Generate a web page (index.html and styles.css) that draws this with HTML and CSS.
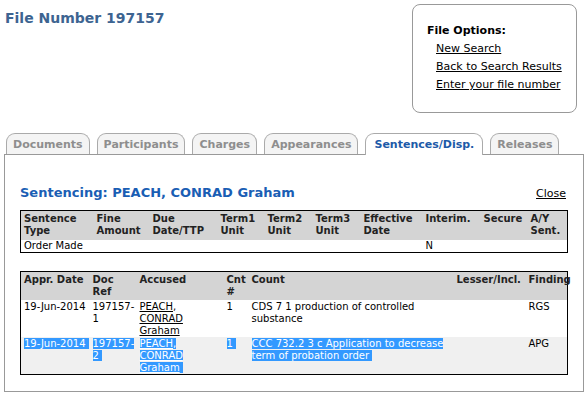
FILE: index.html
```html
<!DOCTYPE html>
<html lang="en">
<head>
    <meta charset="UTF-8">
    <title>File Number 197157</title>
    <link rel="stylesheet" href="styles.css">
</head>
<body>
    <div class="topo">
        <h1 class="titulo">File Number 197157</h1>
        <div class="opcoes">
            <h3>File Options:</h3>
            <a href="#">New Search</a>
            <a href="#">Back to Search Results</a>
            <a href="#">Enter your file number</a>
        </div>
    </div>

    <ul class="abas">
        <li class="aba">Documents</li>
        <li class="aba">Participants</li>
        <li class="aba">Charges</li>
        <li class="aba">Appearances</li>
        <li class="aba ativa">Sentences/Disp.</li>
        <li class="aba">Releases</li>
    </ul>

    <div class="painel">
        <div class="cabecalho">
            <h2>Sentencing: PEACH, CONRAD Graham</h2>
            <a href="#" class="fechar">Close</a>
        </div>

        <table class="tabela t1">
            <colgroup>
                <col style="width:73px"><col style="width:56px"><col style="width:68px"><col style="width:47px"><col style="width:48px">
                <col style="width:48px"><col style="width:62px"><col style="width:58px"><col style="width:47px"><col>
            </colgroup>
            <tr>
                <th>Sentence Type</th>
                <th>Fine Amount</th>
                <th>Due Date/TTP</th>
                <th>Term1 Unit</th>
                <th>Term2 Unit</th>
                <th>Term3 Unit</th>
                <th>Effective Date</th>
                <th>Interim.</th>
                <th>Secure</th>
                <th>A/Y Sent.</th>
            </tr>
            <tr>
                <td>Order Made</td>
                <td></td><td></td><td></td><td></td><td></td><td></td>
                <td>N</td>
                <td></td><td></td>
            </tr>
        </table>

        <table class="tabela t2">
            <colgroup>
                <col style="width:69px"><col style="width:47px"><col style="width:87px"><col style="width:25px">
                <col style="width:205px"><col style="width:72px"><col>
            </colgroup>
            <tr>
                <th>Appr. Date</th>
                <th>Doc Ref</th>
                <th>Accused</th>
                <th>Cnt #</th>
                <th>Count</th>
                <th>Lesser/Incl.</th>
                <th>Finding</th>
            </tr>
            <tr>
                <td>19-Jun-2014</td>
                <td>197157-1</td>
                <td><a href="#">PEACH</a>, <a href="#">CONRAD Graham</a></td>
                <td>1</td>
                <td>CDS 7 1 production of controlled<br>substance</td>
                <td></td>
                <td>RGS</td>
            </tr>
            <tr class="cinza">
                <td><span class="sel">19-Jun-2014</span></td>
                <td><span class="sel">197157-2</span></td>
                <td><span class="sel"><a href="#">PEACH</a>, <a href="#">CONRAD Graham</a></span></td>
                <td><span class="sel">1</span></td>
                <td><span class="sel">CCC 732.2 3 c Application to decrease term of probation order</span></td>
                <td></td>
                <td>APG</td>
            </tr>
        </table>
    </div>
</body>
</html>
```

FILE: styles.css
```css
body {
    margin: 0;
    padding: 4px 1px 4px 4px;
    font-family: "DejaVu Sans", Verdana, sans-serif;
    font-size: 10px;
    color: #000;
    background: #fff;
}
a {
    color: #000;
}
.topo {
    display: flex;
    justify-content: space-between;
    align-items: flex-start;
}
.titulo {
    margin: 6px 0 0 1px;
    font-size: 14px;
    color: #3d6491;
}
.opcoes {
    width: 149px;
    height: 90px;
    margin-right: 7px;
    padding: 17px 0 0 14px;
    border: 1px solid #999;
    border-radius: 8px;
    font-size: 11px;
    line-height: 18px;
}
.opcoes h3 {
    margin: 0;
    font-size: 11px;
}
.opcoes a {
    display: block;
    margin-left: 9px;
}
.abas {
    display: flex;
    gap: 7px;
    margin: 20px 0 0 2px;
    padding: 0;
    list-style: none;
}
.aba {
    height: 20px;
    padding: 0 6px;
    border: 1px solid #aaa;
    border-bottom: none;
    border-radius: 9px 9px 0 0;
    background: #f4f4f4;
    color: #8e8e8e;
    font-weight: bold;
    font-size: 11px;
    line-height: 21px;
}
.aba.ativa {
    position: relative;
    height: 21px;
    margin-bottom: -1px;
    padding: 0 8px;
    background: #fff;
    color: #1d5aa8;
}
.painel {
    padding: 0 15px 16px;
    border: 1px solid #999;
}
.cabecalho {
    display: flex;
    justify-content: space-between;
    align-items: baseline;
    margin: 30px 2px 10px 0;
}
.cabecalho h2 {
    margin: 0;
    font-size: 13px;
    color: #1a5eb4;
}
.fechar {
    font-size: 11px;
}
.tabela {
    width: 100%;
    border-collapse: collapse;
    border: 1px solid #000;
    table-layout: fixed;
    line-height: 12px;
}
.tabela th {
    background: #d4d4d4;
    text-align: left;
    vertical-align: top;
    padding: 2px 2px 3px 3px;
    color: #222;
}
.tabela td {
    vertical-align: top;
    padding: 0 2px 0 3px;
}
.t2 {
    margin-top: 18px;
}
.t2 th {
    padding-bottom: 2px;
}
.t2 td {
    padding-top: 1px;
}
.cinza td {
    background: #f0f0f0;
}
.sel {
    background: #3399ff;
    color: #fff;
    box-shadow: 3px 0 0 #3399ff;
}
.sel a {
    color: #fff;
}
```
